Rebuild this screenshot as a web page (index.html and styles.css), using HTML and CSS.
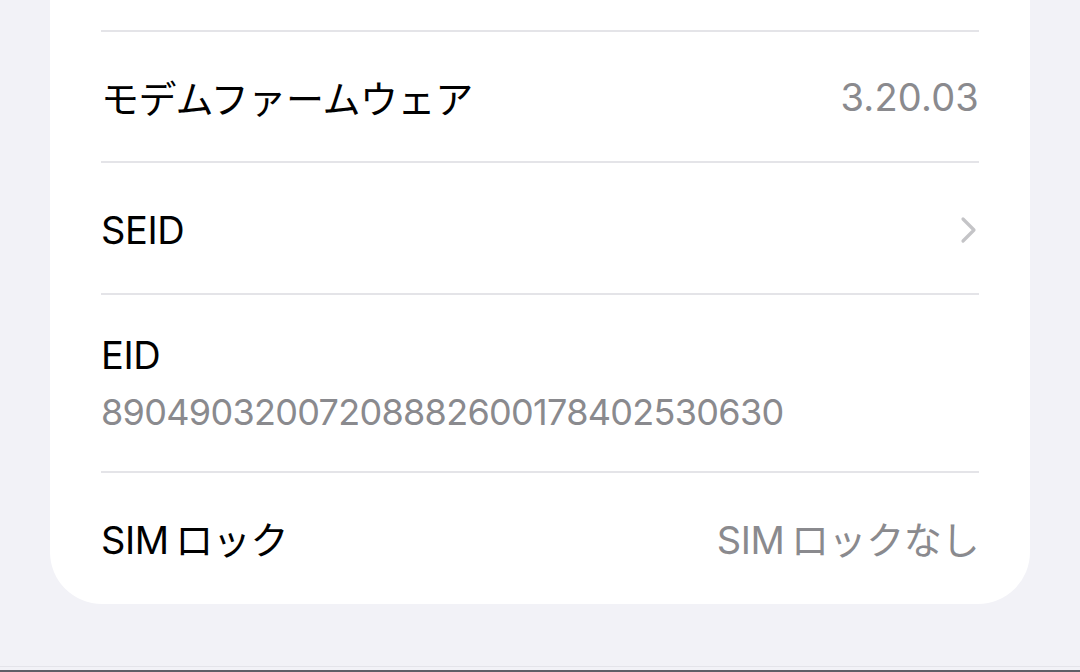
FILE: index.html
```html
<!DOCTYPE html>
<html lang="ja">
<head>
    <meta charset="UTF-8">
    <title>情報</title>
    <link rel="stylesheet" href="styles.css">
</head>
<body>
<div class="page">
    <div class="group">
        <div class="row row-modem">
            <span class="label">モデムファームウェア</span>
            <span class="value num">3.20.03</span>
        </div>
        <div class="row row-seid">
            <span class="label">SEID</span>
            <svg class="chevron" width="18" height="28" viewBox="0 0 18 28">
                <path d="M3 3 L14 14 L3 25" fill="none" stroke="#c4c4c7" stroke-width="3.2" stroke-linecap="round" stroke-linejoin="round"/>
            </svg>
        </div>
        <div class="row row-eid">
            <div class="stack">
                <span class="label">EID</span>
                <span class="sub">89049032007208882600178402530630</span>
            </div>
        </div>
        <div class="row row-sim">
            <span class="label">SIM&thinsp;ロック</span>
            <span class="value">SIM&thinsp;ロックなし</span>
        </div>
    </div>
</div>
<div class="edge"></div>
</body>
</html>
```

FILE: styles.css
```css
* {
    margin: 0;
    padding: 0;
    box-sizing: border-box;
}

html, body {
    height: 100%;
}

body {
    background-color: #f2f2f7;
    font-family: Inter, "Noto Sans CJK JP", sans-serif;
    color: #000;
    overflow: hidden;
    display: flex;
    flex-direction: column;
}

.page {
    flex: 1;
    padding: 0 50px;
}

.group {
    background-color: #fff;
    border-radius: 0 0 52px 52px;
    padding: 30px 51px 0 51px;
}

.row {
    display: flex;
    align-items: center;
    justify-content: space-between;
    border-top: 2px solid #e4e4e8;
}

.row-modem {
    height: 131px;
}

.row-seid {
    height: 132px;
    padding-top: 4px;
}

.row-eid {
    height: 178px;
}

.row-sim {
    height: 133px;
    padding-bottom: 2px;
}

.label {
    font-size: 38px;
    letter-spacing: -0.4px;
}

.value {
    font-size: 38px;
    letter-spacing: -0.4px;
    color: #8a8a8e;
}

.num {
    letter-spacing: 0.2px;
}

.stack {
    display: flex;
    flex-direction: column;
    gap: 12px;
}

.sub {
    font-size: 36px;
    letter-spacing: -0.7px;
    color: #8a8a8e;
}

.chevron {
    margin-right: 1px;
}

.edge {
    height: 6px;
    border-top: 1px solid #e4e4ea;
    border-bottom: 2px solid #5e5e66;
}
```
